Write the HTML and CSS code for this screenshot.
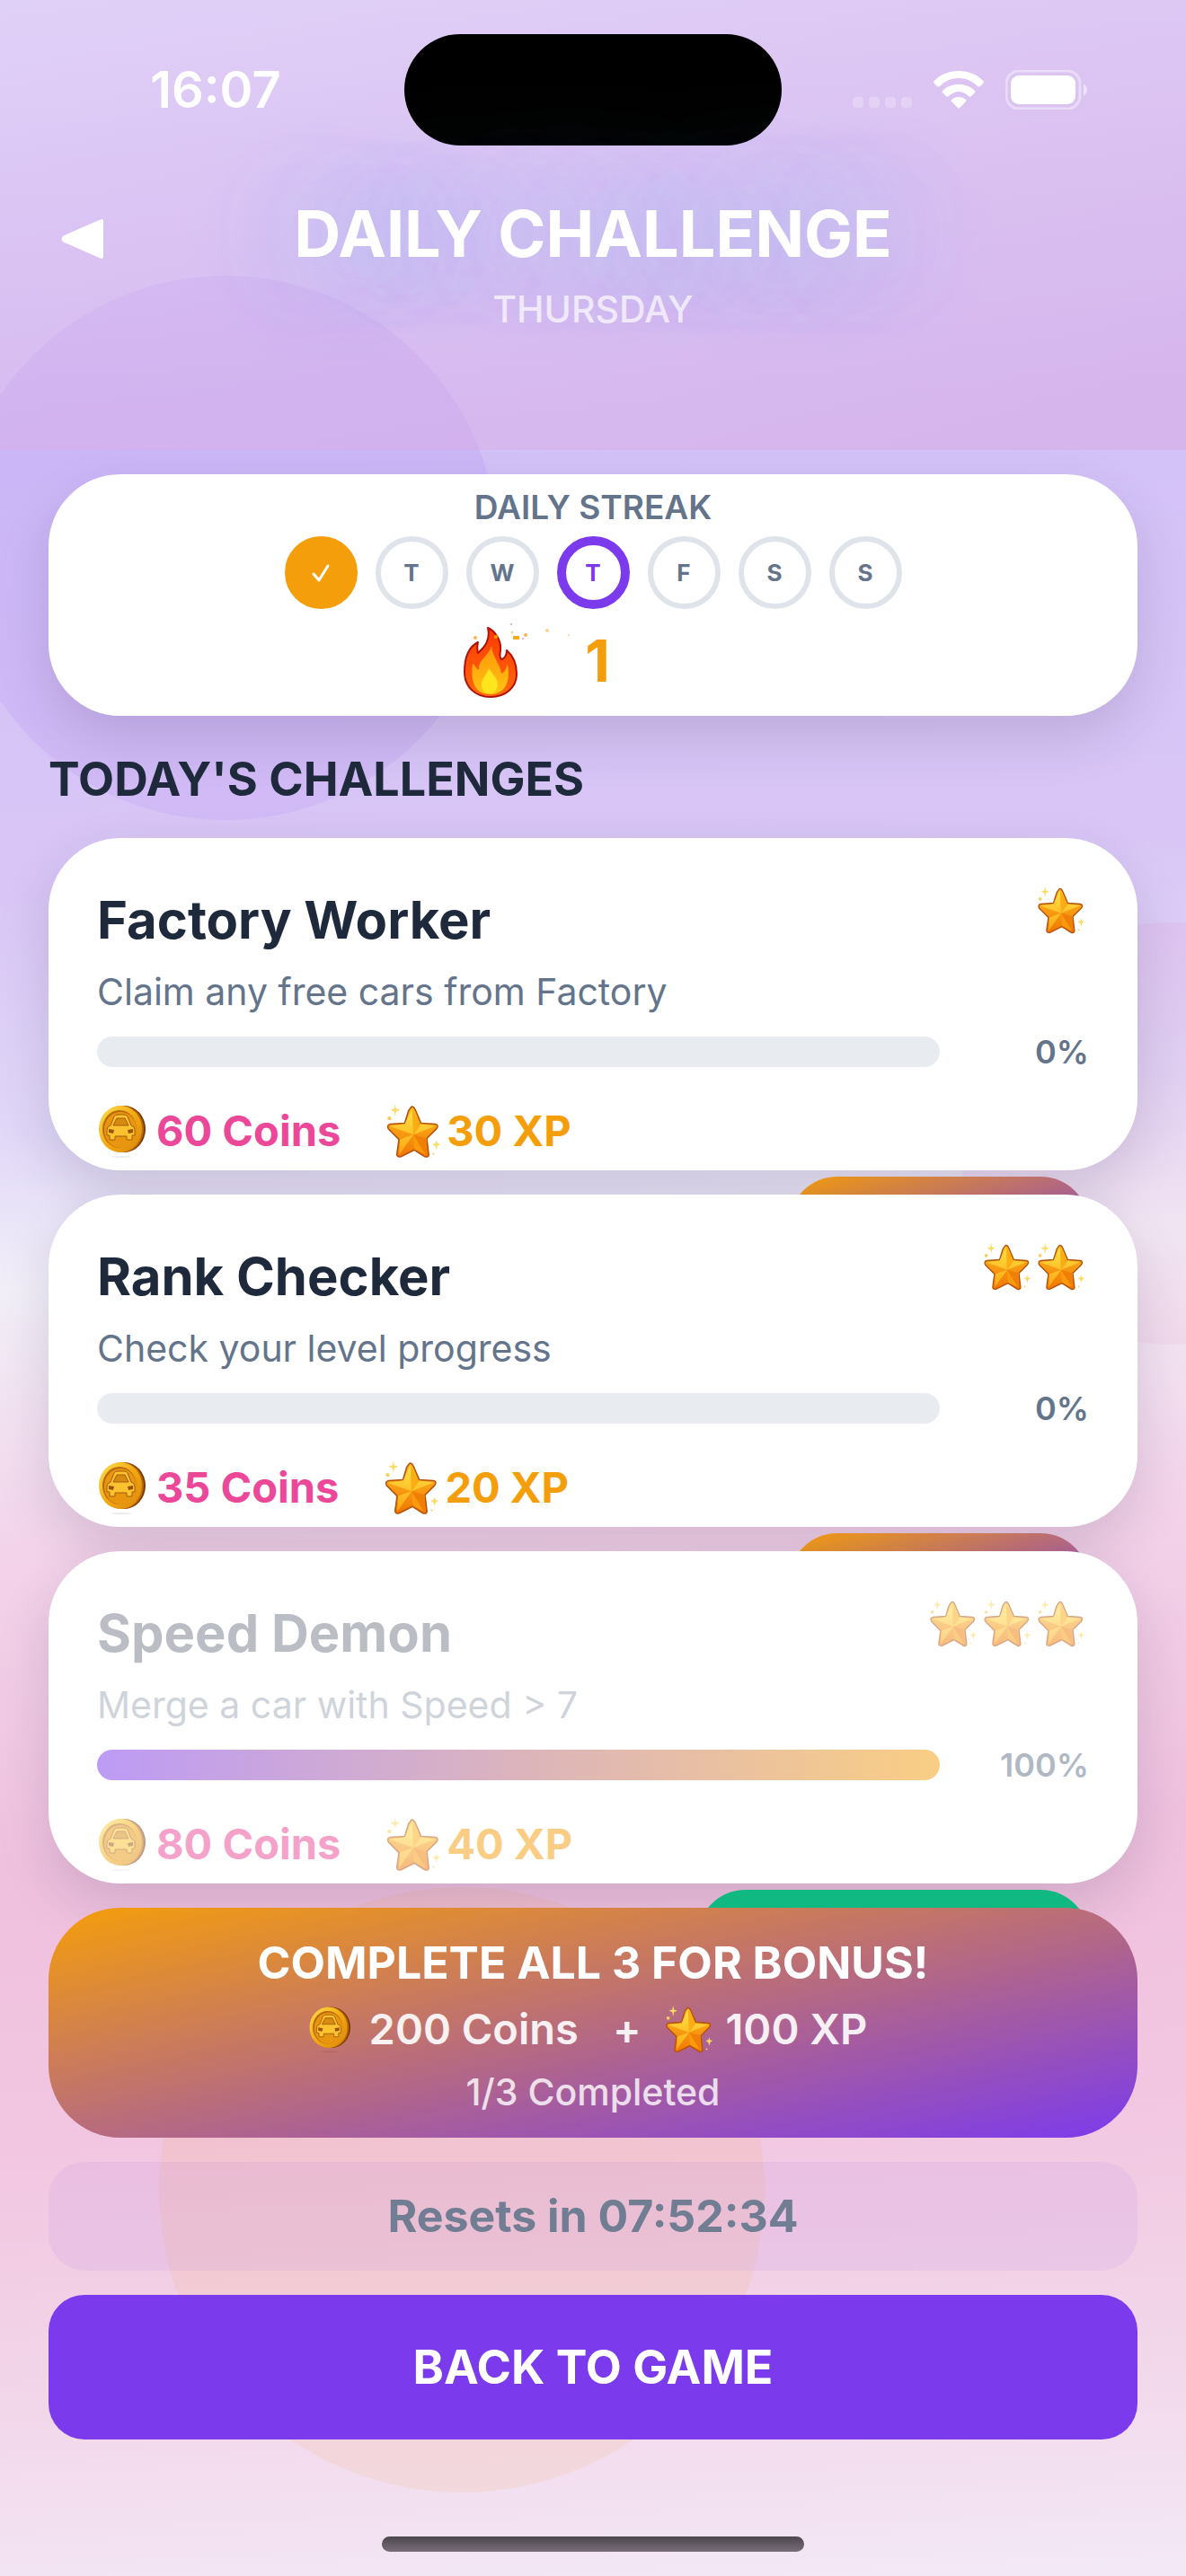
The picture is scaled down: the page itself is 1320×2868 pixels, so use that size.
FILE: index.html
```html
<!DOCTYPE html>
<html lang="en">
<head>
    <meta charset="UTF-8">
    <meta name="viewport" content="width=device-width, initial-scale=1.0">
    <title>Daily Challenge</title>
    <link rel="stylesheet" href="styles.css">
</head>
<body>

<!-- Shared icons -->
<svg class="sprite" aria-hidden="true">
    <defs>
        <linearGradient id="goldLight" x1="0" y1="0" x2="0" y2="1">
            <stop offset="0" stop-color="#ffe84e"/>
            <stop offset="1" stop-color="#ffae12"/>
        </linearGradient>
        <linearGradient id="goldDark" x1="0" y1="0" x2="0" y2="1">
            <stop offset="0" stop-color="#ffc222"/>
            <stop offset="1" stop-color="#f07603"/>
        </linearGradient>
        <linearGradient id="coinRim" x1="0" y1="0" x2="1" y2="1">
            <stop offset="0" stop-color="#ffe04a"/>
            <stop offset="0.5" stop-color="#f3a912"/>
            <stop offset="1" stop-color="#d9850b"/>
        </linearGradient>
        <linearGradient id="flameOuter" x1="0" y1="0" x2="0" y2="1">
            <stop offset="0" stop-color="#fb3a05"/>
            <stop offset="1" stop-color="#ff6a0a"/>
        </linearGradient>
        <linearGradient id="flameMid" x1="0" y1="0" x2="0" y2="1">
            <stop offset="0" stop-color="#ff9608"/>
            <stop offset="1" stop-color="#ffc414"/>
        </linearGradient>
    </defs>
    <symbol id="star" viewBox="0 0 60 60">
        <path d="M29 5Q31 4 33 8L39 22L54 23Q58 24 55 28L45 38L47 55Q47 58 43 57L32 50L18 57Q13 58 14 53L16 39L5 28Q3 24 7 23L22 22L26 9Z" fill="url(#goldDark)" stroke="#b5520c" stroke-width="1.5" stroke-linejoin="round"/>
        <path d="M30 7L31 34L22 23ZM6 25L22 23L31 34ZM39 23L54 25L31 34ZM31 34L16 55L17 39Z" fill="url(#goldLight)" opacity="0.85"/>
        <path d="M31 34L32 49L44 55Z" fill="#fb9a0c"/>
        <path d="M30 7L31 34L38 23Z" fill="#fbad14"/>
        <path d="M31 34L45 38L44 55Z" fill="#f07f08"/>
        <path d="M12 2L13 7L17 8L13 10L12 15L11 10L7 8L11 7ZM55 40L56 43L59 44L56 46L55 50L54 46L51 44L54 43Z" fill="#fbdc62"/>
        <circle cx="6" cy="17" r="2" fill="#f9cf58"/>
        <circle cx="52" cy="54" r="1" fill="#f9cf58"/>
    </symbol>
    <symbol id="coin" viewBox="3 0 60 64">
        <ellipse cx="30" cy="61" rx="11" ry="1" fill="#000" opacity="0.08"/>
        <ellipse cx="33" cy="30" rx="24" ry="26" fill="#7a3a06"/>
        <ellipse cx="31" cy="30" rx="24" ry="26" fill="#b9690b"/>
        <ellipse cx="29" cy="30" rx="24" ry="26" fill="url(#coinRim)"/>
        <ellipse cx="28" cy="30" rx="19" ry="21" fill="#b96a0b"/>
        <ellipse cx="29" cy="31" rx="18" ry="20" fill="#e8960f"/>
        <path d="M18 26L22 16Q23 14 26 14H33Q36 14 37 16L41 26Q45 27 45 31V37H42V42H36V38H23V42H17V37H14V31Q14 27 18 26Z" fill="#fbc230" stroke="#a65a08" stroke-width="1"/>
        <path d="M21 26L25 18H34L38 26Z" fill="#d58a10" stroke="#a65a08" stroke-width="1"/>
        <path d="M16 30L22 31L21 35L16 34ZM43 30L37 31L38 35L43 34Z" fill="#9a5208"/>
    </symbol>
    <symbol id="flame" viewBox="0 0 72 80">
        <path d="M28 1C35 4 43 14 42 25C42 30 40 33 43 36C47 35 49 31 49 26C57 33 60 42 60 52C60 68 47 78 31 78C14 78 2 67 2 50C2 34 7 22 17 17C16 21 16 25 17 29C25 22 31 14 28 1Z" fill="url(#flameOuter)" stroke="#b01208" stroke-width="2" stroke-linejoin="round"/>
        <path d="M32 21C33 34 41 39 43 52C48 50 48 45 50 42C54 62 46 75 31 75C16 75 8 65 11 41C14 42 14 46 18 48C17 36 29 33 32 21Z" fill="url(#flameMid)"/>
        <path d="M29 46C34 54 40 58 39 65C38 71 35 74 30 74C25 74 21 71 21 64C21 57 27 53 29 46Z" fill="#ffe51e"/>
    </symbol>
</svg>

<div class="screen">
    <div class="bg-circle circle-purple"></div>
    <div class="bg-circle circle-pink"></div>
    <div class="bg-circle circle-amber"></div>

    <header class="header">
        <div class="status-bar">
            <span class="time">16:07</span>
            <div class="island"></div>
            <div class="status-icons">
                <svg class="signal" viewBox="0 0 66 12" fill="#fff" aria-hidden="true"><rect width="12" height="12" rx="4"/><rect x="18" width="12" height="12" rx="4"/><rect x="36" width="12" height="12" rx="4"/><rect x="54" width="12" height="12" rx="4"/></svg>
                <svg class="wifi" viewBox="0 0 56 42" fill="#fff" aria-hidden="true">
                    <path d="M28 0C39 0 49 4 55 11Q57 12 55 14L52 17Q51 18 49 17C43 11 36 8 28 8S13 11 7 17Q5 18 4 17L1 14Q-1 12 1 11C7 4 17 0 28 0Z"/>
                    <path d="M28 15C35 15 41 17 46 22Q47 23 46 24L42 28Q41 29 39 28C36 25 32 23 28 23S20 25 17 28Q15 29 14 28L10 24Q9 23 10 22C15 17 21 15 28 15Z"/>
                    <path d="M28 29C31 29 34 30 36 32Q37 33 36 34L29 41Q28 42 27 41L20 34Q19 33 20 32C22 30 25 29 28 29Z"/>
                </svg>
                <svg class="battery" viewBox="0 0 92 44" aria-hidden="true">
                    <rect x="1" y="1" width="82" height="42" rx="14" fill="none" stroke="#fff" stroke-width="3" opacity="0.4"/>
                    <rect x="6" y="6" width="72" height="32" rx="9" fill="#fff"/>
                    <path d="M87 15Q91 18 91 22T87 29Z" fill="#fff" opacity="0.5"/>
                </svg>
            </div>
        </div>
        <div class="title-row">
            <button class="back" type="button" aria-label="Back">
                <svg viewBox="0 0 52 48" aria-hidden="true"><path d="M47 4V44L6 26Q3 24 6 22Z" fill="#fff" stroke="#fff" stroke-width="4" stroke-linejoin="round"/></svg>
            </button>
            <div class="titles">
                <h1>DAILY CHALLENGE</h1>
                <p>THURSDAY</p>
            </div>
        </div>
    </header>

    <main class="content">
        <section class="streak">
            <h3>DAILY STREAK</h3>
            <div class="days">
                <span class="day done"><svg viewBox="0 0 24 24" aria-hidden="true"><path d="M4 13L10 20L20 4" fill="none" stroke="#fff" stroke-width="3" stroke-linecap="round" stroke-linejoin="round"/></svg></span>
                <span class="day">T</span>
                <span class="day">W</span>
                <span class="day today">T</span>
                <span class="day">F</span>
                <span class="day">S</span>
                <span class="day">S</span>
            </div>
            <div class="count">
                <svg class="flame" viewBox="0 0 126 84" aria-hidden="true">
                    <use href="#flame" y="4" width="72" height="80"/>
                    <g fill="#f6b64a">
                        <circle cx="14" cy="16" r="2"/><circle cx="37" cy="15" r="2" fill="#ff9608"/>
                        <rect x="56" y="14" width="7" height="4" fill="#f5ab1c"/><circle cx="70" cy="13" r="2"/>
                        <circle cx="54" cy="1" r="1" fill="#f08cc4"/><circle cx="67" cy="17" r="1" fill="#f08cc4"/>
                        <circle cx="55" cy="10" r="1"/><circle cx="94" cy="8" r="2" opacity="0.6"/><circle cx="118" cy="13" r="1" opacity="0.6"/>
                    </g>
                </svg>
                <strong>1</strong>
            </div>
        </section>

        <h2>TODAY'S CHALLENGES</h2>

        <article class="card">
            <div class="card-head">
                <h3>Factory Worker</h3>
                <div class="stars"><svg><use href="#star"/></svg></div>
            </div>
            <p class="desc">Claim any free cars from Factory</p>
            <div class="progress">
                <div class="bar"><div class="fill" style="width: 0%"></div></div>
                <span>0%</span>
            </div>
            <div class="rewards">
                <span class="coins"><svg><use href="#coin"/></svg>60 Coins</span>
                <span class="xp"><svg><use href="#star"/></svg>30 XP</span>
            </div>
            <button class="claim" type="button" aria-label="Start"></button>
        </article>

        <article class="card">
            <div class="card-head">
                <h3>Rank Checker</h3>
                <div class="stars"><svg><use href="#star"/></svg><svg><use href="#star"/></svg></div>
            </div>
            <p class="desc">Check your level progress</p>
            <div class="progress">
                <div class="bar"><div class="fill" style="width: 0%"></div></div>
                <span>0%</span>
            </div>
            <div class="rewards">
                <span class="coins"><svg><use href="#coin"/></svg>35 Coins</span>
                <span class="xp"><svg><use href="#star"/></svg>20 XP</span>
            </div>
            <button class="claim" type="button" aria-label="Start"></button>
        </article>

        <article class="card completed">
            <div class="card-head">
                <h3>Speed Demon</h3>
                <div class="stars"><svg><use href="#star"/></svg><svg><use href="#star"/></svg><svg><use href="#star"/></svg></div>
            </div>
            <p class="desc">Merge a car with Speed &gt; 7</p>
            <div class="progress">
                <div class="bar"><div class="fill" style="width: 100%"></div></div>
                <span>100%</span>
            </div>
            <div class="rewards">
                <span class="coins"><svg><use href="#coin"/></svg>80 Coins</span>
                <span class="xp"><svg><use href="#star"/></svg>40 XP</span>
            </div>
            <button class="claim" type="button" aria-label="Completed"></button>
        </article>

        <section class="bonus">
            <h3>COMPLETE ALL 3 FOR BONUS!</h3>
            <div class="bonus-rewards">
                <svg><use href="#coin"/></svg><span>200 Coins</span>
                <span class="plus">+</span>
                <svg><use href="#star"/></svg><span>100 XP</span>
            </div>
            <p>1/3 Completed</p>
        </section>

        <div class="timer">Resets in 07:52:34</div>
        <button class="back-to-game" type="button">BACK TO GAME</button>
    </main>

    <div class="home-indicator"></div>
</div>

</body>
</html>
```

FILE: styles.css
```css
* {
    box-sizing: border-box;
}
body {
    font-family: Inter, "Liberation Sans", sans-serif;
    margin: 0;
    color: #1e293b;
}
h1, h2, h3, p {
    margin: 0;
}
button {
    font-family: inherit;
    border: none;
    cursor: pointer;
}
.sprite {
    position: absolute;
    width: 0;
    height: 0;
}
.screen {
    position: relative;
    overflow: hidden;
    display: flex;
    flex-direction: column;
    min-height: 100vh;
    background: linear-gradient(177deg, #ddd3fb 0%, #d2c1f8 17%, #d9c6f6 34%, #e1d8f8 43%, #f2eff8 49%, #f3d3ea 59%, #efc1df 71%, #f2c5e0 81%, #f2d6e9 91%, #f3e9f6 100%);
}

/* Background shapes */
.bg-circle {
    position: absolute;
    border-radius: 50%;
}
.circle-purple {
    left: -52px;
    top: 307px;
    width: 606px;
    height: 606px;
    background: rgba(124, 58, 237, 0.08);
}
.circle-pink {
    right: -217px;
    top: 1027px;
    width: 470px;
    height: 470px;
    background: rgba(236, 72, 153, 0.06);
}
.circle-amber {
    left: 177px;
    top: 2101px;
    width: 674px;
    height: 674px;
    background: rgba(245, 158, 11, 0.08);
}

/* Header */
.header {
    position: relative;
    height: 501px;
    background: linear-gradient(165deg, rgba(236, 200, 235, 0.2), rgba(219, 160, 218, 0.4));
}
.status-bar {
    display: grid;
    grid-template-columns: 1fr 420px 1fr;
    align-items: center;
    height: 162px;
    padding-top: 38px;
}
.time {
    color: #fff;
    font-size: 56px;
    font-weight: 600;
    text-align: center;
    padding-left: 30px;
}
.island {
    height: 124px;
    border-radius: 62px;
    background: #000;
}
.status-icons {
    display: flex;
    align-items: center;
    justify-content: center;
    gap: 24px;
    padding-right: 30px;
}
.signal {
    width: 66px;
    height: 12px;
    margin-top: 28px;
    opacity: 0.25;
}
.wifi {
    width: 56px;
    height: 42px;
}
.battery {
    width: 92px;
    height: 44px;
}
.title-row {
    display: grid;
    grid-template-columns: 128px 1fr 128px;
    padding-top: 56px;
}
.back {
    background: none;
    padding: 0 0 0 66px;
    margin-top: 24px;
    height: 48px;
}
.back svg {
    display: block;
    width: 52px;
    height: 48px;
}
.titles {
    text-align: center;
}
.titles h1 {
    color: #fff;
    font-size: 72px;
    line-height: 84px;
    font-weight: 700;
    text-shadow: 0 0 80px rgba(170, 190, 250, 0.6), 0 0 140px rgba(170, 200, 255, 0.9);
}
.titles p {
    color: rgba(255, 255, 255, 0.7);
    font-size: 41px;
    line-height: 48px;
    font-weight: 500;
    margin-top: 18px;
}

/* Content */
.content {
    position: relative;
    display: flex;
    flex-direction: column;
    gap: 27px;
    padding: 27px 54px;
}
.streak {
    display: flex;
    flex-direction: column;
    align-items: center;
    height: 269px;
    padding-top: 15px;
    background: #fff;
    border-radius: 80px;
    box-shadow: 0 24px 60px rgba(30, 20, 60, 0.14);
}
.streak h3 {
    font-size: 37px;
    line-height: 44px;
    font-weight: 600;
    color: #64748b;
}
.days {
    display: flex;
    gap: 20px;
    margin-top: 10px;
}
.day {
    display: flex;
    align-items: center;
    justify-content: center;
    width: 81px;
    height: 81px;
    border: 6px solid #dfe4eb;
    border-radius: 50%;
    font-size: 26px;
    font-weight: 700;
    color: #64748b;
}
.day.done {
    background: #f59e0b;
    border-color: #f59e0b;
}
.day.done svg {
    width: 24px;
    height: 24px;
}
.day.today {
    border: 10px solid #7c3aed;
    color: #7c3aed;
}
.count {
    display: grid;
    grid-template-columns: 130px 40px 120px;
    align-items: center;
    margin-top: 16px;
}
.flame {
    width: 126px;
    height: 84px;
}
.count strong {
    font-size: 64px;
    line-height: 64px;
    text-align: center;
    color: #f59e0b;
}
h2 {
    font-size: 52px;
    line-height: 64px;
    padding: 12px 0 6px;
    font-weight: 700;
}

/* Challenge cards */
.card {
    position: relative;
    height: 370px;
    padding: 52px 54px 0;
    background: #fff;
    border-radius: 80px;
    box-shadow: 0 24px 60px rgba(30, 20, 60, 0.14);
}
.card-head {
    display: flex;
    justify-content: space-between;
}
.card-head h3 {
    font-size: 58px;
    line-height: 78px;
    font-weight: 700;
}
.stars {
    display: flex;
    gap: 4px;
    margin-right: 4px;
}
.stars svg {
    width: 56px;
    height: 56px;
}
.desc {
    font-size: 41px;
    line-height: 54px;
    margin-top: 14px;
    color: #64748b;
}
.progress {
    display: flex;
    align-items: center;
    justify-content: space-between;
    margin-top: 23px;
}
.bar {
    width: 85%;
    height: 34px;
    border-radius: 17px;
    background: #e8ecf1;
    overflow: hidden;
}
.fill {
    height: 100%;
    background: linear-gradient(90deg, #7c3aed, #f59e0b);
}
.progress span {
    font-size: 36px;
    line-height: 34px;
    font-weight: 600;
    color: #64748b;
}
.rewards {
    display: flex;
    gap: 48px;
    margin-top: 39px;
    font-size: 47px;
    line-height: 64px;
    font-weight: 700;
}
.rewards span {
    display: flex;
    align-items: center;
    gap: 6px;
}
.rewards svg {
    width: 60px;
    height: 64px;
}
.rewards .xp svg {
    width: 64px;
}
.coins {
    color: #ec4899;
}
.xp {
    color: #f59e0b;
}
.claim {
    position: absolute;
    top: 377px;
    right: 54px;
    width: 334px;
    height: 108px;
    border-radius: 54px;
    background: linear-gradient(160deg, #f59e0b, #7c3aed);
}
.completed .claim {
    width: 436px;
    background: #10b981;
}
.completed .card-head h3 {
    opacity: 0.3;
}
.completed .desc {
    opacity: 0.3;
}
.completed .stars, .completed .progress, .completed .rewards {
    opacity: 0.5;
}

/* Bonus */
.bonus {
    position: relative;
    height: 256px;
    padding-top: 29px;
    border-radius: 80px;
    background: linear-gradient(168deg, #f59e0b, #7c3aed);
    color: #fff;
    text-align: center;
}
.bonus h3 {
    font-size: 50px;
    line-height: 64px;
    font-weight: 700;
}
.bonus-rewards {
    display: flex;
    align-items: center;
    justify-content: center;
    gap: 14px;
    margin-top: 12px;
    padding-right: 14px;
    font-size: 47px;
    line-height: 60px;
    font-weight: 600;
}
.bonus-rewards span {
    opacity: 0.9;
}
.bonus-rewards svg {
    width: 56px;
    height: 56px;
}
.bonus-rewards .plus {
    padding: 0 10px 0 24px;
}
.bonus p {
    font-size: 41px;
    line-height: 48px;
    font-weight: 500;
    margin-top: 16px;
    opacity: 0.8;
}
.timer {
    height: 121px;
    line-height: 121px;
    border-radius: 40px;
    background: rgba(124, 58, 237, 0.06);
    font-size: 50px;
    font-weight: 700;
    text-align: center;
    color: #707d93;
}
.back-to-game {
    height: 161px;
    border-radius: 40px;
    background: #7c3aed;
    color: #fff;
    font-size: 52px;
    font-weight: 700;
}
.home-indicator {
    width: 470px;
    height: 17px;
    margin: auto auto 27px;
    border-radius: 9px;
    background: linear-gradient(#4d464f, #776d78);
}
```
